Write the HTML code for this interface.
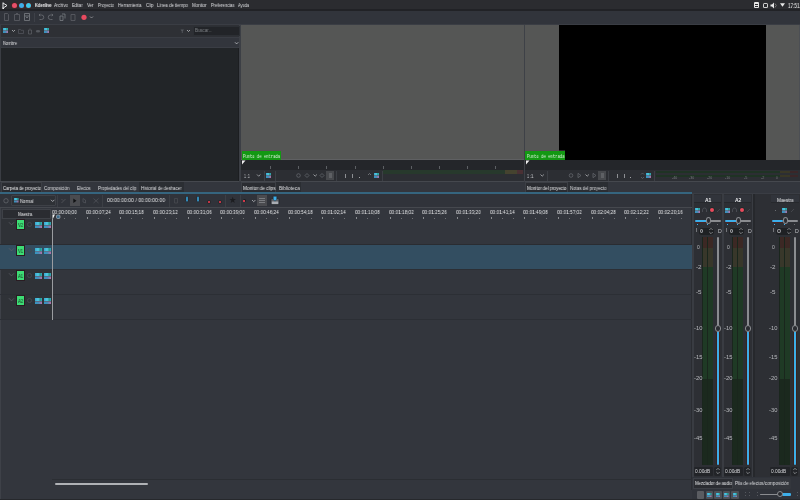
<!DOCTYPE html>
<html><head><meta charset="utf-8"><style>*{margin:0;padding:0;box-sizing:border-box}
html,body{width:800px;height:500px;overflow:hidden;background:#31343b;font-family:"Liberation Sans",sans-serif}
.a{position:absolute}
.t{position:absolute;white-space:nowrap;transform-origin:0 0;will-change:transform}
</style></head><body>
<div class="a" style="left:0px;top:0px;width:800px;height:9.3px;background:#2b2c30;"></div>
<div class="a" style="left:0px;top:9.3px;width:800px;height:1.4px;background:#212226;"></div>
<svg class="a" style="left:2px;top:2px" width="6" height="7" viewBox="0 0 6 7"><path d="M1 0.5 V6.5 M1 1 L5 3.5 L2 5.5" stroke="#e8e8ea" stroke-width="1" fill="none"/><rect x="0.5" y="5.5" width="1.5" height="1.5" fill="#e8e8ea"/></svg>
<div class="a" style="left:11.5px;top:2.5px;width:5px;height:5px;background:#e8506a;border-radius:50%;box-shadow:0 0 0 0.6px #5a2020"></div>
<div class="a" style="left:18.5px;top:2.5px;width:5px;height:5px;background:#3daee9;border-radius:50%;box-shadow:0 0 0 0.6px #5a2020"></div>
<div class="a" style="left:25.5px;top:2.5px;width:5px;height:5px;background:#3dc8e9;border-radius:50%;box-shadow:0 0 0 0.6px #5a2020"></div>
<span class="t" id="t0" style="left:35px;top:3.37px;font-size:5px;line-height:5px;color:#f0f0f2;font-weight:bold;transform:scaleX(0.792);">Kdenlive</span>
<span class="t" id="t1" style="left:54px;top:3.37px;font-size:5px;line-height:5px;color:#dcdde0;font-weight:normal;transform:scaleX(0.839);">Archivo</span>
<span class="t" id="t2" style="left:72px;top:3.37px;font-size:5px;line-height:5px;color:#dcdde0;font-weight:normal;transform:scaleX(0.804);">Editar</span>
<span class="t" id="t3" style="left:87px;top:3.37px;font-size:5px;line-height:5px;color:#dcdde0;font-weight:normal;transform:scaleX(0.865);">Ver</span>
<span class="t" id="t4" style="left:98px;top:3.37px;font-size:5px;line-height:5px;color:#dcdde0;font-weight:normal;transform:scaleX(0.811);">Proyecto</span>
<span class="t" id="t5" style="left:118px;top:3.37px;font-size:5px;line-height:5px;color:#dcdde0;font-weight:normal;transform:scaleX(0.854);">Herramienta</span>
<span class="t" id="t6" style="left:146px;top:3.37px;font-size:5px;line-height:5px;color:#dcdde0;font-weight:normal;transform:scaleX(0.870);">Clip</span>
<span class="t" id="t7" style="left:157px;top:3.37px;font-size:5px;line-height:5px;color:#dcdde0;font-weight:normal;transform:scaleX(0.864);">Línea de tiempo</span>
<span class="t" id="t8" style="left:192px;top:3.37px;font-size:5px;line-height:5px;color:#dcdde0;font-weight:normal;transform:scaleX(0.869);">Monitor</span>
<span class="t" id="t9" style="left:211px;top:3.37px;font-size:5px;line-height:5px;color:#dcdde0;font-weight:normal;transform:scaleX(0.837);">Preferencias</span>
<span class="t" id="t10" style="left:238px;top:3.37px;font-size:5px;line-height:5px;color:#dcdde0;font-weight:normal;transform:scaleX(0.780);">Ayuda</span>
<div class="a" style="left:754px;top:2px;width:5px;height:6px;background:#e6e6e6;border-radius:1px"></div>
<div class="a" style="left:755px;top:4px;width:3px;height:1px;background:#2b2c30;"></div>
<div class="a" style="left:755px;top:6px;width:3px;height:0.8px;background:#2b2c30;"></div>
<div class="a" style="left:763px;top:2.5px;width:5px;height:5.5px;background:#d0d0d0;border-radius:1.5px"></div>
<div class="a" style="left:764px;top:4px;width:3px;height:3px;background:#2b2c30;"></div>
<svg class="a" style="left:770px;top:2px" width="8" height="7" viewBox="0 0 8 7"><path d="M0.5 2.5 H2 L4 0.5 V6.5 L2 4.5 H0.5Z" fill="#e8e8e8"/><path d="M5 1.5 Q7.5 3.5 5 5.5" stroke="#777" stroke-width="1" fill="none"/></svg>
<svg class="a" style="left:780px;top:3px" width="5" height="4" viewBox="0 0 5 4"><path d="M0 0.3 H5 L2.5 3.7Z" fill="#e8e8e8"/></svg>
<span class="t" id="t11" style="left:788px;top:2.31px;font-size:7.2px;line-height:7.2px;color:#ececec;font-weight:normal;transform:scaleX(0.639);">17:51</span>
<div class="a" style="left:0px;top:10.7px;width:800px;height:13.5px;background:#31343b;"></div>
<div class="a" style="left:0px;top:24px;width:800px;height:1px;background:#3a3d44;"></div>
<svg class="a" style="left:0;top:11px" width="100" height="13" viewBox="0 11 100 13"><path d="M4.5 13.5 h3 l1 1 v6 h-4z" stroke="#5d6066" stroke-width="0.8" fill="none"/><path d="M14.5 14.5 h5 v6 h-5z M16 13.5 h2" stroke="#5d6066" stroke-width="0.8" fill="none"/><path d="M24.5 13.5 h5 v7 h-5z M24.5 16 h5 M26 17.5 h2" stroke="#7a7d83" stroke-width="0.8" fill="none"/><path d="M39 15 h2.5 a2 2 0 0 1 0 4.5 h-2 M39 15 l1.2 -1.2 M39 15 l1.2 1.2" stroke="#6c6f75" stroke-width="0.8" fill="none"/><path d="M53 15 h-2.5 a2 2 0 0 0 0 4.5 h2 M53 15 l-1.2 -1.2 M53 15 l-1.2 1.2" stroke="#6c6f75" stroke-width="0.8" fill="none"/><path d="M60 16 h3 v4.5 h-3z M62 14 h3 v4.5" stroke="#7a7d83" stroke-width="0.8" fill="none"/><path d="M71 14.5 h4 v6 h-4z" stroke="#5d6066" stroke-width="0.8" fill="none"/><circle cx="84" cy="17.3" r="2.6" fill="#e84a5f"/><path d="M90 16.5 l1.5 1.5 l1.5 -1.5" stroke="#9a9ca0" stroke-width="0.8" fill="none"/></svg>
<div class="a" style="left:34px;top:13px;width:0.8px;height:9px;background:#3e4148;"></div>
<div class="a" style="left:0px;top:25px;width:241px;height:157px;background:#2e3137;"></div>
<div class="a" style="left:0px;top:25px;width:1px;height:157px;background:#3a3d43;"></div>
<div class="a" style="left:1px;top:25px;width:239px;height:12px;background:#2e3035;"></div>
<div class="a" style="left:1px;top:37px;width:239px;height:1px;background:#3a3d44;"></div>
<div class="a" style="left:1px;top:38px;width:239px;height:9px;background:#32353c;"></div>
<div class="a" style="left:1px;top:47px;width:239px;height:1px;background:#3a3d44;"></div>
<div class="a" style="left:1px;top:48px;width:238px;height:133px;background:#222528;"></div>
<div class="a" style="left:238px;top:48px;width:1px;height:133px;background:#1c1e21;"></div>
<div class="a" style="left:0px;top:181px;width:241px;height:1px;background:#45484e;"></div>
<div class="a" style="left:239.3px;top:25px;width:2.2px;height:157px;background:#3c3f45;"></div>
<svg class="a" style="left:3px;top:28px" width="5" height="5" viewBox="0 0 7 6" preserveAspectRatio="none"><defs><linearGradient id="gt" x1="0" x2="1"><stop offset="0" stop-color="#3aa8cc"/><stop offset="0.45" stop-color="#50c8e8"/><stop offset="0.75" stop-color="#249c8c"/><stop offset="1" stop-color="#38a8c0"/></linearGradient><linearGradient id="gb" x1="0" x2="1"><stop offset="0" stop-color="#3098c0"/><stop offset="0.5" stop-color="#4a8ab8"/><stop offset="1" stop-color="#b870a8"/></linearGradient></defs><rect x="0" y="0" width="7" height="3" fill="url(#gt)"/><rect x="0" y="3" width="7" height="0.5" fill="#8a7a98"/><rect x="0" y="3.6" width="7" height="2.4" fill="url(#gb)"/></svg>
<svg class="a" style="left:10px;top:27px" width="40" height="8" viewBox="10 27 40 8"><path d="M12 30 l1.5 1.5 l1.5 -1.5" stroke="#b8babe" stroke-width="0.8" fill="none"/><path d="M18.5 29.5 h2 l0.5 0.8 h2.5 v3.2 h-5z" stroke="#55585e" stroke-width="0.7" fill="none"/><path d="M28.5 30 h3 v4 h-3z M29.5 29 h1" stroke="#5e6167" stroke-width="0.7" fill="none"/><ellipse cx="38" cy="31.3" rx="2.2" ry="1.2" fill="#55585e"/></svg>
<svg class="a" style="left:44px;top:28px" width="5" height="5" viewBox="0 0 7 6" preserveAspectRatio="none"><defs><linearGradient id="gt" x1="0" x2="1"><stop offset="0" stop-color="#3aa8cc"/><stop offset="0.45" stop-color="#50c8e8"/><stop offset="0.75" stop-color="#249c8c"/><stop offset="1" stop-color="#38a8c0"/></linearGradient><linearGradient id="gb" x1="0" x2="1"><stop offset="0" stop-color="#3098c0"/><stop offset="0.5" stop-color="#4a8ab8"/><stop offset="1" stop-color="#b870a8"/></linearGradient></defs><rect x="0" y="0" width="7" height="3" fill="url(#gt)"/><rect x="0" y="3" width="7" height="0.5" fill="#8a7a98"/><rect x="0" y="3.6" width="7" height="2.4" fill="url(#gb)"/></svg>
<svg class="a" style="left:178px;top:27px" width="15" height="8" viewBox="178 27 15 8"><path d="M180.5 29.5 h3.5 l-1.3 1.8 v1.7 h-0.9 v-1.7z" fill="#55585e"/><path d="M187 30 l1.5 1.5 l1.5 -1.5" stroke="#b8babe" stroke-width="0.8" fill="none"/></svg>
<div class="a" style="left:193px;top:25.5px;width:47px;height:10px;background:#222428;border:0.6px solid #2c2f34"></div>
<span class="t" id="t12" style="left:195px;top:28.54px;font-size:4.8px;line-height:4.8px;color:#7d8085;font-weight:normal;transform:scaleX(0.910);">Buscar...</span>
<span class="t" id="t13" style="left:3px;top:40.77px;font-size:5px;line-height:5px;color:#e0e1e3;font-weight:normal;transform:scaleX(0.787);">Nombre</span>
<svg class="a" style="left:233px;top:41px" width="7" height="5" viewBox="0 0 7 5"><path d="M2 1.3 l1.6 1.6 l1.6 -1.6" stroke="#c8cacd" stroke-width="0.8" fill="none"/></svg>
<div class="a" style="left:241px;top:25px;width:283px;height:135px;background:#555655;"></div>
<div class="a" style="left:241px;top:159px;width:283px;height:1px;background:#5f6062;"></div>
<div class="a" style="left:242px;top:150.6px;width:39px;height:10.2px;background:#139813;box-shadow:0 -0.5px 0 #5a4a5a"></div>
<span class="t" id="t14" style="left:243px;top:154.54px;font-size:4.8px;line-height:4.8px;color:#dcefdc;font-weight:normal;transform:scaleX(0.803);font-family:Liberation Mono">Punto de entrada</span>
<div class="a" style="left:241px;top:160px;width:283px;height:9.5px;background:#24262a;"></div>
<svg class="a" style="left:241px;top:160px" width="5" height="5" viewBox="0 0 5 5"><path d="M1 0.5 H4.5 L1 4.5Z" fill="#f0f0f0"/></svg>
<div class="a" style="left:270px;top:166px;width:0.8px;height:2.6px;background:#5d6064;"></div>
<div class="a" style="left:298px;top:166px;width:0.8px;height:2.6px;background:#5d6064;"></div>
<div class="a" style="left:326px;top:166px;width:0.8px;height:2.6px;background:#5d6064;"></div>
<div class="a" style="left:355px;top:166px;width:0.8px;height:2.6px;background:#5d6064;"></div>
<div class="a" style="left:383px;top:166px;width:0.8px;height:2.6px;background:#5d6064;"></div>
<div class="a" style="left:411px;top:166px;width:0.8px;height:2.6px;background:#5d6064;"></div>
<div class="a" style="left:439px;top:166px;width:0.8px;height:2.6px;background:#5d6064;"></div>
<div class="a" style="left:467px;top:166px;width:0.8px;height:2.6px;background:#5d6064;"></div>
<div class="a" style="left:495px;top:166px;width:0.8px;height:2.6px;background:#5d6064;"></div>
<div class="a" style="left:241px;top:169.5px;width:283px;height:0.8px;background:#34373d;"></div>
<div class="a" style="left:241px;top:170px;width:283px;height:11px;background:#2c2e33;"></div>
<div class="a" style="left:241px;top:181px;width:283px;height:1px;background:#45484e;"></div>
<span class="t" id="t15" style="left:244px;top:174.06px;font-size:5.6px;line-height:5.6px;color:#c8cacd;font-weight:normal;transform:scaleX(0.668);letter-spacing:0.4px">1:1</span>
<svg class="a" style="left:241px;top:170px" width="283" height="11" viewBox="241 170 283 11"><path d="M257 174.5 l1.7 1.7 l1.7 -1.7" stroke="#b0b2b6" stroke-width="0.8" fill="none"/><circle cx="298.5" cy="175.5" r="1.8" stroke="#6a6d72" stroke-width="0.7" fill="none"/><path d="M307 173.5 l2 2 l-2 2 l-2 -2z" stroke="#6a6d72" stroke-width="0.7" fill="none"/><path d="M313.5 174.5 l1.7 1.7 l1.7 -1.7" stroke="#b0b2b6" stroke-width="0.8" fill="none"/><path d="M322 173.5 l2 2 l-2 2 l-2 -2z" stroke="#6a6d72" stroke-width="0.7" fill="none"/><path d="M368 175 l1.5 -1.5 l1.5 1.5" stroke="#8a8c90" stroke-width="0.7" fill="none"/></svg>
<div class="a" style="left:264px;top:171px;width:0.8px;height:10px;background:#3c3f45;"></div>
<div class="a" style="left:275px;top:171px;width:0.8px;height:10px;background:#3c3f45;"></div>
<div class="a" style="left:336px;top:171px;width:0.8px;height:10px;background:#3c3f45;"></div>
<div class="a" style="left:382px;top:171px;width:0.8px;height:10px;background:#3c3f45;"></div>
<svg class="a" style="left:266px;top:173px" width="5" height="5" viewBox="0 0 7 6" preserveAspectRatio="none"><defs><linearGradient id="gt" x1="0" x2="1"><stop offset="0" stop-color="#3aa8cc"/><stop offset="0.45" stop-color="#50c8e8"/><stop offset="0.75" stop-color="#249c8c"/><stop offset="1" stop-color="#38a8c0"/></linearGradient><linearGradient id="gb" x1="0" x2="1"><stop offset="0" stop-color="#3098c0"/><stop offset="0.5" stop-color="#4a8ab8"/><stop offset="1" stop-color="#b870a8"/></linearGradient></defs><rect x="0" y="0" width="7" height="3" fill="url(#gt)"/><rect x="0" y="3" width="7" height="0.5" fill="#8a7a98"/><rect x="0" y="3.6" width="7" height="2.4" fill="url(#gb)"/></svg>
<div class="a" style="left:326px;top:171px;width:8px;height:9px;background:#47494d;"></div>
<div class="a" style="left:328.5px;top:173px;width:3px;height:5px;background:#5e6064;"></div>
<div class="a" style="left:345px;top:174px;width:0.9px;height:3.5px;background:#8d8f93;"></div>
<div class="a" style="left:352px;top:174px;width:0.9px;height:3.5px;background:#8d8f93;"></div>
<div class="a" style="left:359px;top:177px;width:1px;height:1px;background:#a0a2a6;"></div>
<svg class="a" style="left:374px;top:173px" width="5" height="5" viewBox="0 0 7 6" preserveAspectRatio="none"><defs><linearGradient id="gt" x1="0" x2="1"><stop offset="0" stop-color="#3aa8cc"/><stop offset="0.45" stop-color="#50c8e8"/><stop offset="0.75" stop-color="#249c8c"/><stop offset="1" stop-color="#38a8c0"/></linearGradient><linearGradient id="gb" x1="0" x2="1"><stop offset="0" stop-color="#3098c0"/><stop offset="0.5" stop-color="#4a8ab8"/><stop offset="1" stop-color="#b870a8"/></linearGradient></defs><rect x="0" y="0" width="7" height="3" fill="url(#gt)"/><rect x="0" y="3" width="7" height="0.5" fill="#8a7a98"/><rect x="0" y="3.6" width="7" height="2.4" fill="url(#gb)"/></svg>
<div class="a" style="left:383px;top:170px;width:140px;height:4px;background:#27392c;"></div>
<div class="a" style="left:505px;top:170px;width:12px;height:4px;background:#45432f;"></div>
<div class="a" style="left:517px;top:170px;width:6px;height:4px;background:#4a3034;"></div>
<div class="a" style="left:524px;top:25px;width:1.5px;height:157px;background:#3e4147;"></div>
<div class="a" style="left:525px;top:25px;width:275px;height:135px;background:#555655;"></div>
<div class="a" style="left:559px;top:25px;width:207px;height:135px;background:#000000;"></div>
<div class="a" style="left:799px;top:25px;width:1px;height:157px;background:#4c4f54;"></div>
<div class="a" style="left:525px;top:150.6px;width:40px;height:10.2px;background:#139813;box-shadow:0 -0.5px 0 #5a4a5a"></div>
<span class="t" id="t16" style="left:526.5px;top:154.54px;font-size:4.8px;line-height:4.8px;color:#dcefdc;font-weight:normal;transform:scaleX(0.814);font-family:Liberation Mono">Punto de entrada</span>
<div class="a" style="left:525px;top:160px;width:275px;height:9.5px;background:#24262a;"></div>
<svg class="a" style="left:525px;top:160px" width="5" height="5" viewBox="0 0 5 5"><path d="M1 0.5 H4.5 L1 4.5Z" fill="#f0f0f0"/></svg>
<div class="a" style="left:525px;top:169.5px;width:275px;height:0.8px;background:#34373d;"></div>
<div class="a" style="left:525px;top:170px;width:275px;height:11px;background:#2c2e33;"></div>
<div class="a" style="left:525px;top:181px;width:275px;height:1px;background:#45484e;"></div>
<span class="t" id="t17" style="left:527px;top:174.06px;font-size:5.6px;line-height:5.6px;color:#c8cacd;font-weight:normal;transform:scaleX(0.723);letter-spacing:0.4px">1:1</span>
<svg class="a" style="left:525px;top:170px" width="275" height="11" viewBox="525 170 275 11"><path d="M540.5 174.5 l1.7 1.7 l1.7 -1.7" stroke="#b0b2b6" stroke-width="0.8" fill="none"/><circle cx="571" cy="175.5" r="1.8" stroke="#6a6d72" stroke-width="0.7" fill="none"/><path d="M578 173.3 l3 2.2 l-3 2.2z" stroke="#6a6d72" stroke-width="0.7" fill="none"/><path d="M585.5 174.5 l1.7 1.7 l1.7 -1.7" stroke="#b0b2b6" stroke-width="0.8" fill="none"/><path d="M593 173.3 l3 2.2 l-3 2.2z" stroke="#6a6d72" stroke-width="0.7" fill="none"/><path d="M641 174.5 l1.5 -1.5 l1.5 1.5 M641 177 l1.5 1.5 l1.5 -1.5" stroke="#6a6d72" stroke-width="0.7" fill="none"/></svg>
<div class="a" style="left:547px;top:171px;width:0.8px;height:10px;background:#3c3f45;"></div>
<div class="a" style="left:608px;top:171px;width:0.8px;height:10px;background:#3c3f45;"></div>
<div class="a" style="left:654px;top:171px;width:0.8px;height:10px;background:#3c3f45;"></div>
<div class="a" style="left:598px;top:171px;width:8px;height:9px;background:#47494d;"></div>
<div class="a" style="left:600.5px;top:173px;width:3px;height:5px;background:#5e6064;"></div>
<div class="a" style="left:617px;top:174px;width:0.9px;height:3.5px;background:#8d8f93;"></div>
<div class="a" style="left:624px;top:174px;width:0.9px;height:3.5px;background:#8d8f93;"></div>
<div class="a" style="left:630px;top:177px;width:1px;height:1px;background:#a0a2a6;"></div>
<svg class="a" style="left:646px;top:173px" width="5" height="5" viewBox="0 0 7 6" preserveAspectRatio="none"><defs><linearGradient id="gt" x1="0" x2="1"><stop offset="0" stop-color="#3aa8cc"/><stop offset="0.45" stop-color="#50c8e8"/><stop offset="0.75" stop-color="#249c8c"/><stop offset="1" stop-color="#38a8c0"/></linearGradient><linearGradient id="gb" x1="0" x2="1"><stop offset="0" stop-color="#3098c0"/><stop offset="0.5" stop-color="#4a8ab8"/><stop offset="1" stop-color="#b870a8"/></linearGradient></defs><rect x="0" y="0" width="7" height="3" fill="url(#gt)"/><rect x="0" y="3" width="7" height="0.5" fill="#8a7a98"/><rect x="0" y="3.6" width="7" height="2.4" fill="url(#gb)"/></svg>
<div class="a" style="left:656px;top:170.8px;width:124px;height:2.4px;background:#1f3324;"></div>
<div class="a" style="left:780px;top:170.8px;width:10px;height:2.4px;background:#393726;"></div>
<div class="a" style="left:790px;top:170.8px;width:8px;height:2.4px;background:#3a2628;"></div>
<div class="a" style="left:656px;top:174.5px;width:124px;height:2.4px;background:#1f3324;"></div>
<div class="a" style="left:780px;top:174.5px;width:10px;height:2.4px;background:#393726;"></div>
<div class="a" style="left:790px;top:174.5px;width:8px;height:2.4px;background:#3a2628;"></div>
<span class="t" id="t18" style="left:672px;top:177.49px;font-size:3.2px;line-height:3.2px;color:#7a7c80;font-weight:normal;transform:scaleX(1.106);">-40</span>
<span class="t" id="t19" style="left:689px;top:177.49px;font-size:3.2px;line-height:3.2px;color:#7a7c80;font-weight:normal;transform:scaleX(1.106);">-30</span>
<span class="t" id="t20" style="left:707px;top:177.49px;font-size:3.2px;line-height:3.2px;color:#7a7c80;font-weight:normal;transform:scaleX(1.106);">-20</span>
<span class="t" id="t21" style="left:725px;top:177.49px;font-size:3.2px;line-height:3.2px;color:#7a7c80;font-weight:normal;transform:scaleX(1.106);">-10</span>
<span class="t" id="t22" style="left:744px;top:177.49px;font-size:3.2px;line-height:3.2px;color:#7a7c80;font-weight:normal;transform:scaleX(1.196);">-5</span>
<span class="t" id="t23" style="left:761px;top:177.49px;font-size:3.2px;line-height:3.2px;color:#7a7c80;font-weight:normal;transform:scaleX(1.196);">-2</span>
<span class="t" id="t24" style="left:776px;top:177.49px;font-size:3.2px;line-height:3.2px;color:#7a7c80;font-weight:normal;transform:scaleX(0.954);">0</span>
<div class="a" style="left:0px;top:182px;width:800px;height:11px;background:#33363d;"></div>
<div class="a" style="left:1px;top:182px;width:41px;height:10.5px;background:#2a2c31;border:0.6px solid #3c3f45"></div>
<span class="t" id="t25" style="left:2.5px;top:186.64px;font-size:4.8px;line-height:4.8px;color:#e6e7e9;font-weight:normal;transform:scaleX(0.874);">Carpeta de proyecto</span>
<span class="t" id="t26" style="left:44px;top:186.64px;font-size:4.8px;line-height:4.8px;color:#dcdde0;font-weight:normal;transform:scaleX(0.919);">Composición</span>
<span class="t" id="t27" style="left:77px;top:186.64px;font-size:4.8px;line-height:4.8px;color:#dcdde0;font-weight:normal;transform:scaleX(0.844);">Efectos</span>
<span class="t" id="t28" style="left:98px;top:186.64px;font-size:4.8px;line-height:4.8px;color:#dcdde0;font-weight:normal;transform:scaleX(0.891);">Propiedades del clip</span>
<span class="t" id="t29" style="left:141px;top:186.64px;font-size:4.8px;line-height:4.8px;color:#dcdde0;font-weight:normal;transform:scaleX(0.899);">Historial de deshacer</span>
<div class="a" style="left:139px;top:182px;width:45px;height:10.5px;background:#2b2e33;"></div>
<span class="t" id="t30" style="left:141px;top:186.64px;font-size:4.8px;line-height:4.8px;color:#dcdde0;font-weight:normal;transform:scaleX(0.899);">Historial de deshacer</span>
<div class="a" style="left:241px;top:182px;width:35px;height:10.5px;background:#2a2c31;border:0.6px solid #3c3f45"></div>
<span class="t" id="t31" style="left:243px;top:186.64px;font-size:4.8px;line-height:4.8px;color:#e6e7e9;font-weight:normal;transform:scaleX(0.967);">Monitor de clips</span>
<div class="a" style="left:276px;top:182px;width:25px;height:10.5px;background:#2b2e33;"></div>
<span class="t" id="t32" style="left:279px;top:186.64px;font-size:4.8px;line-height:4.8px;color:#dcdde0;font-weight:normal;transform:scaleX(0.985);">Biblioteca</span>
<div class="a" style="left:525px;top:182px;width:43px;height:10.5px;background:#2a2c31;border:0.6px solid #3c3f45"></div>
<span class="t" id="t33" style="left:527px;top:186.64px;font-size:4.8px;line-height:4.8px;color:#e6e7e9;font-weight:normal;transform:scaleX(0.909);">Monitor del proyecto</span>
<div class="a" style="left:568px;top:182px;width:40px;height:10.5px;background:#2b2e33;"></div>
<span class="t" id="t34" style="left:570px;top:186.64px;font-size:4.8px;line-height:4.8px;color:#dcdde0;font-weight:normal;transform:scaleX(0.912);">Notas del proyecto</span>
<div class="a" style="left:0px;top:192.2px;width:692px;height:1.5px;background:#35657f;"></div>
<div class="a" style="left:0px;top:194px;width:692px;height:14px;background:#30333a;"></div>
<div class="a" style="left:11px;top:195px;width:45px;height:11px;background:#2e3136;border:0.7px solid #3e4147;border-radius:1px"></div>
<svg class="a" style="left:14px;top:198px" width="4.5" height="4.5" viewBox="0 0 7 6" preserveAspectRatio="none"><defs><linearGradient id="gt" x1="0" x2="1"><stop offset="0" stop-color="#3aa8cc"/><stop offset="0.45" stop-color="#50c8e8"/><stop offset="0.75" stop-color="#249c8c"/><stop offset="1" stop-color="#38a8c0"/></linearGradient><linearGradient id="gb" x1="0" x2="1"><stop offset="0" stop-color="#3098c0"/><stop offset="0.5" stop-color="#4a8ab8"/><stop offset="1" stop-color="#b870a8"/></linearGradient></defs><rect x="0" y="0" width="7" height="3" fill="url(#gt)"/><rect x="0" y="3" width="7" height="0.5" fill="#8a7a98"/><rect x="0" y="3.6" width="7" height="2.4" fill="url(#gb)"/></svg>
<span class="t" id="t35" style="left:20px;top:198.57px;font-size:5px;line-height:5px;color:#e2e3e5;font-weight:normal;transform:scaleX(0.837);">Normal</span>
<div class="a" style="left:57px;top:195px;width:0.8px;height:12px;background:#3c3f45;"></div>
<div class="a" style="left:70px;top:195px;width:9.5px;height:11px;background:#4a4b4f;"></div>
<div class="a" style="left:102px;top:195px;width:0.8px;height:12px;background:#3c3f45;"></div>
<span class="t" id="t36" style="left:107px;top:198.31px;font-size:5.3px;line-height:5.3px;color:#e0e1e3;font-weight:normal;transform:scaleX(0.960);">00:00:00:00 / 00:00:00:00</span>
<div class="a" style="left:169px;top:195px;width:0.8px;height:12px;background:#3c3f45;"></div>
<svg class="a" style="left:185px;top:195.5px" width="4" height="8" viewBox="0 0 4 8"><path d="M1 0.6 h2 v4.2 l-1 1.8 l-1 -1.8z" fill="#3daee9" stroke="#17191c" stroke-width="0.5"/></svg>
<svg class="a" style="left:196px;top:195.5px" width="4" height="8" viewBox="0 0 4 8"><path d="M1 0.6 h2 v4.2 l-1 1.8 l-1 -1.8z" fill="#3daee9" stroke="#17191c" stroke-width="0.5"/></svg>
<div class="a" style="left:207.8px;top:200.8px;width:2.4px;height:2px;background:#c03545;box-shadow:0 0 0 0.4px #1c1d20"></div>
<div class="a" style="left:218.8px;top:200.8px;width:2.4px;height:2px;background:#c03545;box-shadow:0 0 0 0.4px #1c1d20"></div>
<div class="a" style="left:225px;top:195px;width:0.8px;height:12px;background:#3c3f45;"></div>
<div class="a" style="left:240px;top:195px;width:0.8px;height:12px;background:#3c3f45;"></div>
<div class="a" style="left:242.5px;top:198.8px;width:3.5px;height:3.5px;background:#1a1b1e;border-radius:50%"></div>
<div class="a" style="left:243px;top:200px;width:1.6px;height:1.8px;background:#d03a4a;"></div>
<svg class="a" style="left:0;top:194px" width="290" height="14" viewBox="0 194 290 14"><circle cx="6" cy="200.8" r="2.2" stroke="#6a6d72" stroke-width="0.7" fill="none"/><path d="M51 199.8 l1.7 1.7 l1.7 -1.7" stroke="#c0c2c6" stroke-width="0.8" fill="none"/><path d="M61.5 203 l4 -4 M61.5 199 l1.5 1.5" stroke="#55585e" stroke-width="0.8" fill="none"/><path d="M73.3 198.5 l3.2 2.3 l-3.2 2.3z" fill="#111214"/><path d="M83 198.5 l2.5 1.5 v3 l-2.5 -1z" stroke="#55585e" stroke-width="0.7" fill="none"/><path d="M93.5 198.5 l5 4.5 M93.5 203 l5 -4.5" stroke="#55585e" stroke-width="0.7" fill="none"/><path d="M174.5 198.5 h3 v4.5 h-3z" stroke="#4a4d53" stroke-width="0.7" fill="none"/><path d="M232.7 196.8 l0.8 2.3 h2.4 l-1.9 1.5 l0.7 2.4 l-2 -1.4 l-2 1.4 l0.7 -2.4 l-1.9 -1.5 h2.4z" fill="#1c1d20"/><path d="M252 200 l1.7 1.7 l1.7 -1.7" stroke="#b8babe" stroke-width="0.8" fill="none"/></svg>
<div class="a" style="left:257px;top:195px;width:9.5px;height:11px;background:#4a4b4f;"></div>
<div class="a" style="left:259px;top:198px;width:5.5px;height:0.7px;background:#7a7c80;"></div>
<div class="a" style="left:259px;top:200px;width:5.5px;height:0.7px;background:#7a7c80;"></div>
<div class="a" style="left:259px;top:202px;width:5.5px;height:0.7px;background:#7a7c80;"></div>
<svg class="a" style="left:270px;top:195px" width="10" height="11" viewBox="0 0 10 11"><rect x="1" y="3.5" width="8" height="6" rx="1" fill="#5d6167" stroke="#1e2023" stroke-width="0.6"/><rect x="1.8" y="6.5" width="6.4" height="2.6" fill="#a9adb3"/><path d="M3.2 1.2 h3.6 v3 l-1.8 2 l-1.8 -2z" fill="#3daee9" stroke="#1e2023" stroke-width="0.5"/></svg>
<div class="a" style="left:0px;top:208px;width:692px;height:291px;background:#33363d;"></div>
<div class="a" style="left:0px;top:208px;width:1.2px;height:291px;background:#3e4148;"></div>
<div class="a" style="left:691px;top:194px;width:1px;height:296px;background:#2a2c31;"></div>
<div class="a" style="left:1px;top:219px;width:51px;height:101px;background:#2f3237;"></div>
<div class="a" style="left:2px;top:208.5px;width:49px;height:10px;background:#2a2c31;border:0.6px solid #3e4147"></div>
<span class="t" id="t37" style="left:18px;top:212.64px;font-size:4.8px;line-height:4.8px;color:#e2e3e5;font-weight:normal;transform:scaleX(0.808);">Maestra</span>
<div class="a" style="left:52px;top:208px;width:639px;height:11px;background:#33363d;"></div>
<div class="a" style="left:0px;top:207.3px;width:692px;height:0.7px;background:#45484e;"></div>
<span class="t" id="t38" style="left:52.0px;top:210.06px;font-size:5.6px;line-height:5.6px;color:#e4e5e7;font-weight:normal;transform:scaleX(0.839);">00:00:00;00</span>
<div class="a" style="left:64.0px;top:217.8px;width:0.8px;height:1px;background:#6f7175;"></div>
<div class="a" style="left:75.0px;top:217.8px;width:0.8px;height:1px;background:#6f7175;"></div>
<span class="t" id="t39" style="left:85.67px;top:210.06px;font-size:5.6px;line-height:5.6px;color:#e4e5e7;font-weight:normal;transform:scaleX(0.839);">00:00:07;24</span>
<div class="a" style="left:86.67px;top:216.8px;width:0.8px;height:2px;background:#8a8c90;"></div>
<div class="a" style="left:97.67px;top:217.8px;width:0.8px;height:1px;background:#6f7175;"></div>
<div class="a" style="left:108.67px;top:217.8px;width:0.8px;height:1px;background:#6f7175;"></div>
<span class="t" id="t40" style="left:119.34px;top:210.06px;font-size:5.6px;line-height:5.6px;color:#e4e5e7;font-weight:normal;transform:scaleX(0.839);">00:00:15;18</span>
<div class="a" style="left:120.34px;top:216.8px;width:0.8px;height:2px;background:#8a8c90;"></div>
<div class="a" style="left:131.34px;top:217.8px;width:0.8px;height:1px;background:#6f7175;"></div>
<div class="a" style="left:142.34px;top:217.8px;width:0.8px;height:1px;background:#6f7175;"></div>
<span class="t" id="t41" style="left:153.01px;top:210.06px;font-size:5.6px;line-height:5.6px;color:#e4e5e7;font-weight:normal;transform:scaleX(0.839);">00:00:23;12</span>
<div class="a" style="left:154.01px;top:216.8px;width:0.8px;height:2px;background:#8a8c90;"></div>
<div class="a" style="left:165.01px;top:217.8px;width:0.8px;height:1px;background:#6f7175;"></div>
<div class="a" style="left:176.01px;top:217.8px;width:0.8px;height:1px;background:#6f7175;"></div>
<span class="t" id="t42" style="left:186.68px;top:210.06px;font-size:5.6px;line-height:5.6px;color:#e4e5e7;font-weight:normal;transform:scaleX(0.839);">00:00:31;06</span>
<div class="a" style="left:187.68px;top:216.8px;width:0.8px;height:2px;background:#8a8c90;"></div>
<div class="a" style="left:198.68px;top:217.8px;width:0.8px;height:1px;background:#6f7175;"></div>
<div class="a" style="left:209.68px;top:217.8px;width:0.8px;height:1px;background:#6f7175;"></div>
<span class="t" id="t43" style="left:220.35px;top:210.06px;font-size:5.6px;line-height:5.6px;color:#e4e5e7;font-weight:normal;transform:scaleX(0.839);">00:00:39;00</span>
<div class="a" style="left:221.35px;top:216.8px;width:0.8px;height:2px;background:#8a8c90;"></div>
<div class="a" style="left:232.35px;top:217.8px;width:0.8px;height:1px;background:#6f7175;"></div>
<div class="a" style="left:243.35px;top:217.8px;width:0.8px;height:1px;background:#6f7175;"></div>
<span class="t" id="t44" style="left:254.02px;top:210.06px;font-size:5.6px;line-height:5.6px;color:#e4e5e7;font-weight:normal;transform:scaleX(0.839);">00:00:46;24</span>
<div class="a" style="left:255.02px;top:216.8px;width:0.8px;height:2px;background:#8a8c90;"></div>
<div class="a" style="left:266.02px;top:217.8px;width:0.8px;height:1px;background:#6f7175;"></div>
<div class="a" style="left:277.02px;top:217.8px;width:0.8px;height:1px;background:#6f7175;"></div>
<span class="t" id="t45" style="left:287.69px;top:210.06px;font-size:5.6px;line-height:5.6px;color:#e4e5e7;font-weight:normal;transform:scaleX(0.839);">00:00:54;18</span>
<div class="a" style="left:288.69px;top:216.8px;width:0.8px;height:2px;background:#8a8c90;"></div>
<div class="a" style="left:299.69px;top:217.8px;width:0.8px;height:1px;background:#6f7175;"></div>
<div class="a" style="left:310.69px;top:217.8px;width:0.8px;height:1px;background:#6f7175;"></div>
<span class="t" id="t46" style="left:321.36px;top:210.06px;font-size:5.6px;line-height:5.6px;color:#e4e5e7;font-weight:normal;transform:scaleX(0.839);">00:01:02;14</span>
<div class="a" style="left:322.36px;top:216.8px;width:0.8px;height:2px;background:#8a8c90;"></div>
<div class="a" style="left:333.36px;top:217.8px;width:0.8px;height:1px;background:#6f7175;"></div>
<div class="a" style="left:344.36px;top:217.8px;width:0.8px;height:1px;background:#6f7175;"></div>
<span class="t" id="t47" style="left:355.03px;top:210.06px;font-size:5.6px;line-height:5.6px;color:#e4e5e7;font-weight:normal;transform:scaleX(0.839);">00:01:10;08</span>
<div class="a" style="left:356.03px;top:216.8px;width:0.8px;height:2px;background:#8a8c90;"></div>
<div class="a" style="left:367.03px;top:217.8px;width:0.8px;height:1px;background:#6f7175;"></div>
<div class="a" style="left:378.03px;top:217.8px;width:0.8px;height:1px;background:#6f7175;"></div>
<span class="t" id="t48" style="left:388.7px;top:210.06px;font-size:5.6px;line-height:5.6px;color:#e4e5e7;font-weight:normal;transform:scaleX(0.839);">00:01:18;02</span>
<div class="a" style="left:389.7px;top:216.8px;width:0.8px;height:2px;background:#8a8c90;"></div>
<div class="a" style="left:400.7px;top:217.8px;width:0.8px;height:1px;background:#6f7175;"></div>
<div class="a" style="left:411.7px;top:217.8px;width:0.8px;height:1px;background:#6f7175;"></div>
<span class="t" id="t49" style="left:422.37px;top:210.06px;font-size:5.6px;line-height:5.6px;color:#e4e5e7;font-weight:normal;transform:scaleX(0.839);">00:01:25;26</span>
<div class="a" style="left:423.37px;top:216.8px;width:0.8px;height:2px;background:#8a8c90;"></div>
<div class="a" style="left:434.37px;top:217.8px;width:0.8px;height:1px;background:#6f7175;"></div>
<div class="a" style="left:445.37px;top:217.8px;width:0.8px;height:1px;background:#6f7175;"></div>
<span class="t" id="t50" style="left:456.04px;top:210.06px;font-size:5.6px;line-height:5.6px;color:#e4e5e7;font-weight:normal;transform:scaleX(0.839);">00:01:33;20</span>
<div class="a" style="left:457.04px;top:216.8px;width:0.8px;height:2px;background:#8a8c90;"></div>
<div class="a" style="left:468.04px;top:217.8px;width:0.8px;height:1px;background:#6f7175;"></div>
<div class="a" style="left:479.04px;top:217.8px;width:0.8px;height:1px;background:#6f7175;"></div>
<span class="t" id="t51" style="left:489.71px;top:210.06px;font-size:5.6px;line-height:5.6px;color:#e4e5e7;font-weight:normal;transform:scaleX(0.839);">00:01:41;14</span>
<div class="a" style="left:490.71px;top:216.8px;width:0.8px;height:2px;background:#8a8c90;"></div>
<div class="a" style="left:501.71px;top:217.8px;width:0.8px;height:1px;background:#6f7175;"></div>
<div class="a" style="left:512.71px;top:217.8px;width:0.8px;height:1px;background:#6f7175;"></div>
<span class="t" id="t52" style="left:523.38px;top:210.06px;font-size:5.6px;line-height:5.6px;color:#e4e5e7;font-weight:normal;transform:scaleX(0.839);">00:01:49;08</span>
<div class="a" style="left:524.38px;top:216.8px;width:0.8px;height:2px;background:#8a8c90;"></div>
<div class="a" style="left:535.38px;top:217.8px;width:0.8px;height:1px;background:#6f7175;"></div>
<div class="a" style="left:546.38px;top:217.8px;width:0.8px;height:1px;background:#6f7175;"></div>
<span class="t" id="t53" style="left:557.05px;top:210.06px;font-size:5.6px;line-height:5.6px;color:#e4e5e7;font-weight:normal;transform:scaleX(0.839);">00:01:57;02</span>
<div class="a" style="left:558.05px;top:216.8px;width:0.8px;height:2px;background:#8a8c90;"></div>
<div class="a" style="left:569.05px;top:217.8px;width:0.8px;height:1px;background:#6f7175;"></div>
<div class="a" style="left:580.05px;top:217.8px;width:0.8px;height:1px;background:#6f7175;"></div>
<span class="t" id="t54" style="left:590.72px;top:210.06px;font-size:5.6px;line-height:5.6px;color:#e4e5e7;font-weight:normal;transform:scaleX(0.839);">00:02:04;28</span>
<div class="a" style="left:591.72px;top:216.8px;width:0.8px;height:2px;background:#8a8c90;"></div>
<div class="a" style="left:602.72px;top:217.8px;width:0.8px;height:1px;background:#6f7175;"></div>
<div class="a" style="left:613.72px;top:217.8px;width:0.8px;height:1px;background:#6f7175;"></div>
<span class="t" id="t55" style="left:624.39px;top:210.06px;font-size:5.6px;line-height:5.6px;color:#e4e5e7;font-weight:normal;transform:scaleX(0.839);">00:02:12;22</span>
<div class="a" style="left:625.39px;top:216.8px;width:0.8px;height:2px;background:#8a8c90;"></div>
<div class="a" style="left:636.39px;top:217.8px;width:0.8px;height:1px;background:#6f7175;"></div>
<div class="a" style="left:647.39px;top:217.8px;width:0.8px;height:1px;background:#6f7175;"></div>
<span class="t" id="t56" style="left:658.06px;top:210.06px;font-size:5.6px;line-height:5.6px;color:#e4e5e7;font-weight:normal;transform:scaleX(0.839);">00:02:20;16</span>
<div class="a" style="left:659.06px;top:216.8px;width:0.8px;height:2px;background:#8a8c90;"></div>
<div class="a" style="left:670.06px;top:217.8px;width:0.8px;height:1px;background:#6f7175;"></div>
<div class="a" style="left:681.06px;top:217.8px;width:0.8px;height:1px;background:#6f7175;"></div>
<div class="a" style="left:0px;top:244.3px;width:692px;height:0.7px;background:#2a2c31;"></div>
<div class="a" style="left:0px;top:245px;width:692px;height:24.3px;background:#334e61;"></div>
<div class="a" style="left:0px;top:269.3px;width:692px;height:0.7px;background:#2c2f35;"></div>
<div class="a" style="left:0px;top:294.3px;width:692px;height:0.7px;background:#2c2f35;"></div>
<div class="a" style="left:0px;top:319.3px;width:692px;height:0.8px;background:#2c2f35;"></div>
<div class="a" style="left:1px;top:245px;width:51px;height:24.3px;background:#334e61;"></div>
<svg class="a" style="left:8px;top:221px" width="7" height="6" viewBox="0 0 7 6"><path d="M1 1.3 l2.5 2.6 l2.5 -2.6" stroke="#5f6268" stroke-width="0.7" fill="none"/></svg>
<div class="a" style="left:16px;top:219px;width:8.5px;height:11px;background:#3ddc75;border:0.6px solid #2a1c22"></div>
<span class="t" id="t57" style="left:17.6px;top:222.77px;font-size:5.0px;line-height:5.0px;color:#14301c;font-weight:normal;transform:scaleX(0.849);">V2</span>
<div class="a" style="left:27px;top:222px;width:5px;height:5px;background:transparent;border:0.6px solid #44474d;border-radius:50%"></div>
<svg class="a" style="left:35px;top:222px" width="7" height="6.3" viewBox="0 0 7 6" preserveAspectRatio="none"><defs><linearGradient id="gt" x1="0" x2="1"><stop offset="0" stop-color="#3aa8cc"/><stop offset="0.45" stop-color="#50c8e8"/><stop offset="0.75" stop-color="#249c8c"/><stop offset="1" stop-color="#38a8c0"/></linearGradient><linearGradient id="gb" x1="0" x2="1"><stop offset="0" stop-color="#3098c0"/><stop offset="0.5" stop-color="#4a8ab8"/><stop offset="1" stop-color="#b870a8"/></linearGradient></defs><rect x="0" y="0" width="7" height="3" fill="url(#gt)"/><rect x="0" y="3" width="7" height="0.5" fill="#8a7a98"/><rect x="0" y="3.6" width="7" height="2.4" fill="url(#gb)"/></svg>
<svg class="a" style="left:44px;top:222px" width="7" height="6.3" viewBox="0 0 7 6" preserveAspectRatio="none"><defs><linearGradient id="gt" x1="0" x2="1"><stop offset="0" stop-color="#3aa8cc"/><stop offset="0.45" stop-color="#50c8e8"/><stop offset="0.75" stop-color="#249c8c"/><stop offset="1" stop-color="#38a8c0"/></linearGradient><linearGradient id="gb" x1="0" x2="1"><stop offset="0" stop-color="#3098c0"/><stop offset="0.5" stop-color="#4a8ab8"/><stop offset="1" stop-color="#b870a8"/></linearGradient></defs><rect x="0" y="0" width="7" height="3" fill="url(#gt)"/><rect x="0" y="3" width="7" height="0.5" fill="#8a7a98"/><rect x="0" y="3.6" width="7" height="2.4" fill="url(#gb)"/></svg>
<svg class="a" style="left:8px;top:247px" width="7" height="6" viewBox="0 0 7 6"><path d="M1 1.3 l2.5 2.6 l2.5 -2.6" stroke="#5f6268" stroke-width="0.7" fill="none"/></svg>
<div class="a" style="left:16px;top:245px;width:8.5px;height:11px;background:#3ddc75;border:0.6px solid #2a1c22"></div>
<span class="t" id="t58" style="left:17.6px;top:248.77px;font-size:5.0px;line-height:5.0px;color:#14301c;font-weight:normal;transform:scaleX(0.849);">V1</span>
<div class="a" style="left:27px;top:248px;width:5px;height:5px;background:transparent;border:0.6px solid #44474d;border-radius:50%"></div>
<svg class="a" style="left:35px;top:248px" width="7" height="6.3" viewBox="0 0 7 6" preserveAspectRatio="none"><defs><linearGradient id="gt" x1="0" x2="1"><stop offset="0" stop-color="#3aa8cc"/><stop offset="0.45" stop-color="#50c8e8"/><stop offset="0.75" stop-color="#249c8c"/><stop offset="1" stop-color="#38a8c0"/></linearGradient><linearGradient id="gb" x1="0" x2="1"><stop offset="0" stop-color="#3098c0"/><stop offset="0.5" stop-color="#4a8ab8"/><stop offset="1" stop-color="#b870a8"/></linearGradient></defs><rect x="0" y="0" width="7" height="3" fill="url(#gt)"/><rect x="0" y="3" width="7" height="0.5" fill="#8a7a98"/><rect x="0" y="3.6" width="7" height="2.4" fill="url(#gb)"/></svg>
<svg class="a" style="left:44px;top:248px" width="7" height="6.3" viewBox="0 0 7 6" preserveAspectRatio="none"><defs><linearGradient id="gt" x1="0" x2="1"><stop offset="0" stop-color="#3aa8cc"/><stop offset="0.45" stop-color="#50c8e8"/><stop offset="0.75" stop-color="#249c8c"/><stop offset="1" stop-color="#38a8c0"/></linearGradient><linearGradient id="gb" x1="0" x2="1"><stop offset="0" stop-color="#3098c0"/><stop offset="0.5" stop-color="#4a8ab8"/><stop offset="1" stop-color="#b870a8"/></linearGradient></defs><rect x="0" y="0" width="7" height="3" fill="url(#gt)"/><rect x="0" y="3" width="7" height="0.5" fill="#8a7a98"/><rect x="0" y="3.6" width="7" height="2.4" fill="url(#gb)"/></svg>
<svg class="a" style="left:8px;top:272px" width="7" height="6" viewBox="0 0 7 6"><path d="M1 1.3 l2.5 2.6 l2.5 -2.6" stroke="#5f6268" stroke-width="0.7" fill="none"/></svg>
<div class="a" style="left:16px;top:270px;width:8.5px;height:11px;background:#3ddc75;border:0.6px solid #2a1c22"></div>
<span class="t" id="t59" style="left:17.6px;top:273.77px;font-size:5.0px;line-height:5.0px;color:#14301c;font-weight:normal;transform:scaleX(0.849);">A1</span>
<div class="a" style="left:27px;top:273px;width:5px;height:5px;background:transparent;border:0.6px solid #44474d;border-radius:50%"></div>
<svg class="a" style="left:35px;top:273px" width="7" height="6.3" viewBox="0 0 7 6" preserveAspectRatio="none"><defs><linearGradient id="gt" x1="0" x2="1"><stop offset="0" stop-color="#3aa8cc"/><stop offset="0.45" stop-color="#50c8e8"/><stop offset="0.75" stop-color="#249c8c"/><stop offset="1" stop-color="#38a8c0"/></linearGradient><linearGradient id="gb" x1="0" x2="1"><stop offset="0" stop-color="#3098c0"/><stop offset="0.5" stop-color="#4a8ab8"/><stop offset="1" stop-color="#b870a8"/></linearGradient></defs><rect x="0" y="0" width="7" height="3" fill="url(#gt)"/><rect x="0" y="3" width="7" height="0.5" fill="#8a7a98"/><rect x="0" y="3.6" width="7" height="2.4" fill="url(#gb)"/></svg>
<svg class="a" style="left:44px;top:273px" width="7" height="6.3" viewBox="0 0 7 6" preserveAspectRatio="none"><defs><linearGradient id="gt" x1="0" x2="1"><stop offset="0" stop-color="#3aa8cc"/><stop offset="0.45" stop-color="#50c8e8"/><stop offset="0.75" stop-color="#249c8c"/><stop offset="1" stop-color="#38a8c0"/></linearGradient><linearGradient id="gb" x1="0" x2="1"><stop offset="0" stop-color="#3098c0"/><stop offset="0.5" stop-color="#4a8ab8"/><stop offset="1" stop-color="#b870a8"/></linearGradient></defs><rect x="0" y="0" width="7" height="3" fill="url(#gt)"/><rect x="0" y="3" width="7" height="0.5" fill="#8a7a98"/><rect x="0" y="3.6" width="7" height="2.4" fill="url(#gb)"/></svg>
<svg class="a" style="left:8px;top:297px" width="7" height="6" viewBox="0 0 7 6"><path d="M1 1.3 l2.5 2.6 l2.5 -2.6" stroke="#5f6268" stroke-width="0.7" fill="none"/></svg>
<div class="a" style="left:16px;top:295px;width:8.5px;height:11px;background:#3ddc75;border:0.6px solid #2a1c22"></div>
<span class="t" id="t60" style="left:17.6px;top:298.77px;font-size:5.0px;line-height:5.0px;color:#14301c;font-weight:normal;transform:scaleX(0.849);">A2</span>
<div class="a" style="left:27px;top:298px;width:5px;height:5px;background:transparent;border:0.6px solid #44474d;border-radius:50%"></div>
<svg class="a" style="left:35px;top:298px" width="7" height="6.3" viewBox="0 0 7 6" preserveAspectRatio="none"><defs><linearGradient id="gt" x1="0" x2="1"><stop offset="0" stop-color="#3aa8cc"/><stop offset="0.45" stop-color="#50c8e8"/><stop offset="0.75" stop-color="#249c8c"/><stop offset="1" stop-color="#38a8c0"/></linearGradient><linearGradient id="gb" x1="0" x2="1"><stop offset="0" stop-color="#3098c0"/><stop offset="0.5" stop-color="#4a8ab8"/><stop offset="1" stop-color="#b870a8"/></linearGradient></defs><rect x="0" y="0" width="7" height="3" fill="url(#gt)"/><rect x="0" y="3" width="7" height="0.5" fill="#8a7a98"/><rect x="0" y="3.6" width="7" height="2.4" fill="url(#gb)"/></svg>
<svg class="a" style="left:44px;top:298px" width="7" height="6.3" viewBox="0 0 7 6" preserveAspectRatio="none"><defs><linearGradient id="gt" x1="0" x2="1"><stop offset="0" stop-color="#3aa8cc"/><stop offset="0.45" stop-color="#50c8e8"/><stop offset="0.75" stop-color="#249c8c"/><stop offset="1" stop-color="#38a8c0"/></linearGradient><linearGradient id="gb" x1="0" x2="1"><stop offset="0" stop-color="#3098c0"/><stop offset="0.5" stop-color="#4a8ab8"/><stop offset="1" stop-color="#b870a8"/></linearGradient></defs><rect x="0" y="0" width="7" height="3" fill="url(#gt)"/><rect x="0" y="3" width="7" height="0.5" fill="#8a7a98"/><rect x="0" y="3.6" width="7" height="2.4" fill="url(#gb)"/></svg>
<div class="a" style="left:52.3px;top:219px;width:1px;height:101px;background:#9a9ca0;"></div>
<svg class="a" style="left:52px;top:214px" width="10" height="6" viewBox="0 0 10 6"><path d="M0.5 0.5 h2.5 l-2.5 5z" fill="#f2f2f2"/><rect x="4.5" y="1" width="3.5" height="3.5" rx="1" fill="#3a6a8a" stroke="#d0d2d6" stroke-width="0.5"/></svg>
<div class="a" style="left:52px;top:479.3px;width:640px;height:0.8px;background:#2b2e33;"></div>
<div class="a" style="left:55px;top:483.2px;width:93px;height:1.9px;background:#b0b2b6;border-radius:1px"></div>
<div class="a" style="left:692px;top:194px;width:108px;height:284px;background:#2d2f34;"></div>
<div class="a" style="left:692px;top:193.3px;width:108px;height:0.7px;background:#3a3d44;"></div>
<div class="a" style="left:692px;top:194px;width:1.2px;height:284px;background:#3c3f46;"></div>
<div class="a" style="left:693px;top:194px;width:29px;height:283px;background:#2d2f34;"></div>
<div class="a" style="left:692px;top:194px;width:1.5px;height:283px;background:#393c42;"></div>
<div class="a" style="left:694px;top:194.5px;width:27px;height:8.3px;background:#31343b;border-bottom:0.8px solid #26282c"></div>
<span class="t" id="t61" style="left:704.5px;top:197.57px;font-size:5px;line-height:5px;color:#e8e9eb;font-weight:bold;transform:scaleX(0.937);">A1</span>
<svg class="a" style="left:695px;top:207.5px" width="5" height="5" viewBox="0 0 7 6" preserveAspectRatio="none"><defs><linearGradient id="gt" x1="0" x2="1"><stop offset="0" stop-color="#3aa8cc"/><stop offset="0.45" stop-color="#50c8e8"/><stop offset="0.75" stop-color="#249c8c"/><stop offset="1" stop-color="#38a8c0"/></linearGradient><linearGradient id="gb" x1="0" x2="1"><stop offset="0" stop-color="#3098c0"/><stop offset="0.5" stop-color="#4a8ab8"/><stop offset="1" stop-color="#b870a8"/></linearGradient></defs><rect x="0" y="0" width="7" height="3" fill="url(#gt)"/><rect x="0" y="3" width="7" height="0.5" fill="#8a7a98"/><rect x="0" y="3.6" width="7" height="2.4" fill="url(#gb)"/></svg>
<svg class="a" style="left:693px;top:206px" width="29" height="8" viewBox="0 0 29 8"><path d="M9.5 6 v-2 a2 2 0 0 1 4 0 v2" stroke="#55585e" stroke-width="0.7" fill="none"/><path d="M24 6 l3 -3" stroke="#4a4d53" stroke-width="0.8"/></svg>
<div class="a" style="left:709.5px;top:207.5px;width:4px;height:4px;background:#e84a5c;border-radius:50%;box-shadow:0 0 0 0.8px #1c2a2a"></div>
<div class="a" style="left:695px;top:219.5px;width:12px;height:2.5px;background:#3daee9;border-radius:1.2px;box-shadow:0 0.6px 0 0.3px #4a2424"></div>
<div class="a" style="left:708px;top:220px;width:12.5px;height:1.8px;background:#8a8c90;border-radius:1px"></div>
<div class="a" style="left:705.5px;top:217.3px;width:5.5px;height:6.5px;background:#2a2c31;border:0.7px solid #8a8c90;border-radius:50%"></div>
<div class="a" style="left:696.5px;top:223.8px;width:0.8px;height:1.6px;background:#3daee9;"></div>
<div class="a" style="left:706.5px;top:223.8px;width:0.8px;height:1.6px;background:#3daee9;"></div>
<div class="a" style="left:716.5px;top:223.8px;width:0.8px;height:1.6px;background:#6a6c70;"></div>
<span class="t" id="t62" style="left:696px;top:229.24px;font-size:4.8px;line-height:4.8px;color:#b0b2b6;font-weight:normal;transform:scaleX(1.116);">I</span>
<div class="a" style="left:698.5px;top:227.5px;width:15px;height:7px;background:#1f2124;border-radius:3px"></div>
<div class="a" style="left:699.5px;top:229px;width:3.5px;height:4px;background:#1f2124;border:0.6px solid #9a9ca0;border-radius:50%"></div>
<svg class="a" style="left:708px;top:227px" width="6" height="8" viewBox="0 0 6 8"><path d="M1.3 3 l1.7 -1.7 l1.7 1.7 M1.3 5 l1.7 1.7 l1.7 -1.7" stroke="#a8aaae" stroke-width="0.7" fill="none"/></svg>
<span class="t" id="t63" style="left:717.5px;top:229.2px;font-size:5.2px;line-height:5.2px;color:#c0c2c6;font-weight:normal;transform:scaleX(0.933);">D</span>
<div class="a" style="left:702.3px;top:237px;width:10.7px;height:228px;background:#1a261d;"></div>
<div class="a" style="left:702.8px;top:237px;width:4.6px;height:11px;background:#3c2824;"></div>
<div class="a" style="left:702.8px;top:248px;width:4.6px;height:19px;background:#38372a;"></div>
<div class="a" style="left:702.8px;top:267px;width:4.6px;height:112px;background:#1f3a25;"></div>
<div class="a" style="left:702.8px;top:379px;width:4.6px;height:86px;background:#1b291e;"></div>
<div class="a" style="left:708px;top:237px;width:4.6px;height:11px;background:#3c2824;"></div>
<div class="a" style="left:708px;top:248px;width:4.6px;height:19px;background:#38372a;"></div>
<div class="a" style="left:708px;top:267px;width:4.6px;height:112px;background:#1f3a25;"></div>
<div class="a" style="left:708px;top:379px;width:4.6px;height:86px;background:#1b291e;"></div>
<div class="a" style="left:716.5px;top:237px;width:2.6px;height:91px;background:#8a8c90;border-radius:1.3px"></div>
<div class="a" style="left:716px;top:331px;width:3.6px;height:134px;background:#3a2220;border-radius:1.5px"></div>
<div class="a" style="left:716.6px;top:331px;width:2.4px;height:134px;background:#3daee9;border-radius:1.2px"></div>
<div class="a" style="left:714.5px;top:325px;width:6.5px;height:6.5px;background:#2a2c31;border:0.7px solid #8a8c90;border-radius:50%"></div>
<span class="t" id="t64" style="left:697.4px;top:246.11px;font-size:4.6px;line-height:4.6px;color:#b8babe;font-weight:normal;transform:scaleX(1.093);">0</span>
<span class="t" id="t65" style="left:695.8px;top:265.61px;font-size:4.6px;line-height:4.6px;color:#b8babe;font-weight:normal;transform:scaleX(1.368);">-2</span>
<span class="t" id="t66" style="left:695.8px;top:290.61px;font-size:4.6px;line-height:4.6px;color:#b8babe;font-weight:normal;transform:scaleX(1.368);">-5</span>
<span class="t" id="t67" style="left:694.2px;top:326.61px;font-size:4.6px;line-height:4.6px;color:#b8babe;font-weight:normal;transform:scaleX(1.265);">-10</span>
<span class="t" id="t68" style="left:694.2px;top:355.61px;font-size:4.6px;line-height:4.6px;color:#b8babe;font-weight:normal;transform:scaleX(1.265);">-15</span>
<span class="t" id="t69" style="left:694.2px;top:377.11px;font-size:4.6px;line-height:4.6px;color:#b8babe;font-weight:normal;transform:scaleX(1.265);">-20</span>
<span class="t" id="t70" style="left:694.2px;top:409.11px;font-size:4.6px;line-height:4.6px;color:#b8babe;font-weight:normal;transform:scaleX(1.265);">-30</span>
<span class="t" id="t71" style="left:694.2px;top:436.61px;font-size:4.6px;line-height:4.6px;color:#b8babe;font-weight:normal;transform:scaleX(1.265);">-45</span>
<div class="a" style="left:694px;top:466.5px;width:19px;height:9.5px;background:#222428;border-radius:1px"></div>
<div class="a" style="left:714px;top:466.5px;width:7px;height:9.5px;background:#222428;border-radius:2px"></div>
<span class="t" id="t72" style="left:695px;top:470.44px;font-size:4.8px;line-height:4.8px;color:#d8d9dc;font-weight:normal;transform:scaleX(0.986);">0.00dB</span>
<svg class="a" style="left:715px;top:466px" width="6" height="10" viewBox="0 0 6 10"><path d="M1.3 4 l1.7 -1.7 l1.7 1.7 M1.3 6 l1.7 1.7 l1.7 -1.7" stroke="#a8aaae" stroke-width="0.7" fill="none"/></svg>
<div class="a" style="left:723px;top:194px;width:29px;height:283px;background:#2d2f34;"></div>
<div class="a" style="left:722px;top:194px;width:1.5px;height:283px;background:#393c42;"></div>
<div class="a" style="left:724px;top:194.5px;width:27px;height:8.3px;background:#31343b;border-bottom:0.8px solid #26282c"></div>
<span class="t" id="t73" style="left:734.5px;top:197.57px;font-size:5px;line-height:5px;color:#e8e9eb;font-weight:bold;transform:scaleX(0.937);">A2</span>
<svg class="a" style="left:725px;top:207.5px" width="5" height="5" viewBox="0 0 7 6" preserveAspectRatio="none"><defs><linearGradient id="gt" x1="0" x2="1"><stop offset="0" stop-color="#3aa8cc"/><stop offset="0.45" stop-color="#50c8e8"/><stop offset="0.75" stop-color="#249c8c"/><stop offset="1" stop-color="#38a8c0"/></linearGradient><linearGradient id="gb" x1="0" x2="1"><stop offset="0" stop-color="#3098c0"/><stop offset="0.5" stop-color="#4a8ab8"/><stop offset="1" stop-color="#b870a8"/></linearGradient></defs><rect x="0" y="0" width="7" height="3" fill="url(#gt)"/><rect x="0" y="3" width="7" height="0.5" fill="#8a7a98"/><rect x="0" y="3.6" width="7" height="2.4" fill="url(#gb)"/></svg>
<svg class="a" style="left:723px;top:206px" width="29" height="8" viewBox="0 0 29 8"><path d="M9.5 6 v-2 a2 2 0 0 1 4 0 v2" stroke="#55585e" stroke-width="0.7" fill="none"/><path d="M24 6 l3 -3" stroke="#4a4d53" stroke-width="0.8"/></svg>
<div class="a" style="left:739.5px;top:207.5px;width:4px;height:4px;background:#e84a5c;border-radius:50%;box-shadow:0 0 0 0.8px #1c2a2a"></div>
<div class="a" style="left:725px;top:219.5px;width:12px;height:2.5px;background:#3daee9;border-radius:1.2px;box-shadow:0 0.6px 0 0.3px #4a2424"></div>
<div class="a" style="left:738px;top:220px;width:12.5px;height:1.8px;background:#8a8c90;border-radius:1px"></div>
<div class="a" style="left:735.5px;top:217.3px;width:5.5px;height:6.5px;background:#2a2c31;border:0.7px solid #8a8c90;border-radius:50%"></div>
<div class="a" style="left:726.5px;top:223.8px;width:0.8px;height:1.6px;background:#3daee9;"></div>
<div class="a" style="left:736.5px;top:223.8px;width:0.8px;height:1.6px;background:#3daee9;"></div>
<div class="a" style="left:746.5px;top:223.8px;width:0.8px;height:1.6px;background:#6a6c70;"></div>
<span class="t" id="t74" style="left:726px;top:229.24px;font-size:4.8px;line-height:4.8px;color:#b0b2b6;font-weight:normal;transform:scaleX(1.116);">I</span>
<div class="a" style="left:728.5px;top:227.5px;width:15px;height:7px;background:#1f2124;border-radius:3px"></div>
<div class="a" style="left:729.5px;top:229px;width:3.5px;height:4px;background:#1f2124;border:0.6px solid #9a9ca0;border-radius:50%"></div>
<svg class="a" style="left:738px;top:227px" width="6" height="8" viewBox="0 0 6 8"><path d="M1.3 3 l1.7 -1.7 l1.7 1.7 M1.3 5 l1.7 1.7 l1.7 -1.7" stroke="#a8aaae" stroke-width="0.7" fill="none"/></svg>
<span class="t" id="t75" style="left:747.5px;top:229.2px;font-size:5.2px;line-height:5.2px;color:#c0c2c6;font-weight:normal;transform:scaleX(0.933);">D</span>
<div class="a" style="left:732.3px;top:237px;width:10.7px;height:228px;background:#1a261d;"></div>
<div class="a" style="left:732.8px;top:237px;width:4.6px;height:11px;background:#3c2824;"></div>
<div class="a" style="left:732.8px;top:248px;width:4.6px;height:19px;background:#38372a;"></div>
<div class="a" style="left:732.8px;top:267px;width:4.6px;height:112px;background:#1f3a25;"></div>
<div class="a" style="left:732.8px;top:379px;width:4.6px;height:86px;background:#1b291e;"></div>
<div class="a" style="left:738px;top:237px;width:4.6px;height:11px;background:#3c2824;"></div>
<div class="a" style="left:738px;top:248px;width:4.6px;height:19px;background:#38372a;"></div>
<div class="a" style="left:738px;top:267px;width:4.6px;height:112px;background:#1f3a25;"></div>
<div class="a" style="left:738px;top:379px;width:4.6px;height:86px;background:#1b291e;"></div>
<div class="a" style="left:746.5px;top:237px;width:2.6px;height:91px;background:#8a8c90;border-radius:1.3px"></div>
<div class="a" style="left:746px;top:331px;width:3.6px;height:134px;background:#3a2220;border-radius:1.5px"></div>
<div class="a" style="left:746.6px;top:331px;width:2.4px;height:134px;background:#3daee9;border-radius:1.2px"></div>
<div class="a" style="left:744.5px;top:325px;width:6.5px;height:6.5px;background:#2a2c31;border:0.7px solid #8a8c90;border-radius:50%"></div>
<span class="t" id="t76" style="left:727.4px;top:246.11px;font-size:4.6px;line-height:4.6px;color:#b8babe;font-weight:normal;transform:scaleX(1.093);">0</span>
<span class="t" id="t77" style="left:725.8px;top:265.61px;font-size:4.6px;line-height:4.6px;color:#b8babe;font-weight:normal;transform:scaleX(1.368);">-2</span>
<span class="t" id="t78" style="left:725.8px;top:290.61px;font-size:4.6px;line-height:4.6px;color:#b8babe;font-weight:normal;transform:scaleX(1.368);">-5</span>
<span class="t" id="t79" style="left:724.2px;top:326.61px;font-size:4.6px;line-height:4.6px;color:#b8babe;font-weight:normal;transform:scaleX(1.265);">-10</span>
<span class="t" id="t80" style="left:724.2px;top:355.61px;font-size:4.6px;line-height:4.6px;color:#b8babe;font-weight:normal;transform:scaleX(1.265);">-15</span>
<span class="t" id="t81" style="left:724.2px;top:377.11px;font-size:4.6px;line-height:4.6px;color:#b8babe;font-weight:normal;transform:scaleX(1.265);">-20</span>
<span class="t" id="t82" style="left:724.2px;top:409.11px;font-size:4.6px;line-height:4.6px;color:#b8babe;font-weight:normal;transform:scaleX(1.265);">-30</span>
<span class="t" id="t83" style="left:724.2px;top:436.61px;font-size:4.6px;line-height:4.6px;color:#b8babe;font-weight:normal;transform:scaleX(1.265);">-45</span>
<div class="a" style="left:724px;top:466.5px;width:19px;height:9.5px;background:#222428;border-radius:1px"></div>
<div class="a" style="left:744px;top:466.5px;width:7px;height:9.5px;background:#222428;border-radius:2px"></div>
<span class="t" id="t84" style="left:725px;top:470.44px;font-size:4.8px;line-height:4.8px;color:#d8d9dc;font-weight:normal;transform:scaleX(0.986);">0.00dB</span>
<svg class="a" style="left:745px;top:466px" width="6" height="10" viewBox="0 0 6 10"><path d="M1.3 4 l1.7 -1.7 l1.7 1.7 M1.3 6 l1.7 1.7 l1.7 -1.7" stroke="#a8aaae" stroke-width="0.7" fill="none"/></svg>
<div class="a" style="left:751.5px;top:194px;width:1.5px;height:283px;background:#393c42;"></div>
<div class="a" style="left:753px;top:194px;width:2px;height:283px;background:#26282c;"></div>
<div class="a" style="left:755px;top:194px;width:45px;height:283px;background:#2d2f34;"></div>
<div class="a" style="left:771px;top:194.5px;width:28px;height:8.3px;background:#31343b;border-bottom:0.8px solid #26282c"></div>
<span class="t" id="t85" style="left:777px;top:197.57px;font-size:5px;line-height:5px;color:#e8e9eb;font-weight:normal;transform:scaleX(0.913);">Maestra</span>
<div class="a" style="left:775px;top:209.5px;width:1px;height:1px;background:#6a6c70;"></div>
<svg class="a" style="left:782px;top:207.5px" width="5" height="5" viewBox="0 0 7 6" preserveAspectRatio="none"><defs><linearGradient id="gt" x1="0" x2="1"><stop offset="0" stop-color="#3aa8cc"/><stop offset="0.45" stop-color="#50c8e8"/><stop offset="0.75" stop-color="#249c8c"/><stop offset="1" stop-color="#38a8c0"/></linearGradient><linearGradient id="gb" x1="0" x2="1"><stop offset="0" stop-color="#3098c0"/><stop offset="0.5" stop-color="#4a8ab8"/><stop offset="1" stop-color="#b870a8"/></linearGradient></defs><rect x="0" y="0" width="7" height="3" fill="url(#gt)"/><rect x="0" y="3" width="7" height="0.5" fill="#8a7a98"/><rect x="0" y="3.6" width="7" height="2.4" fill="url(#gb)"/></svg>
<svg class="a" style="left:789px;top:206px" width="8" height="8" viewBox="0 0 8 8"><path d="M2 6 l3 -3" stroke="#4a4d53" stroke-width="0.8"/></svg>
<div class="a" style="left:772px;top:219.5px;width:11px;height:2.5px;background:#3daee9;border-radius:1.2px;box-shadow:0 0.6px 0 0.3px #4a2424"></div>
<div class="a" style="left:787px;top:220px;width:10.5px;height:1.8px;background:#8a8c90;border-radius:1px"></div>
<div class="a" style="left:782.5px;top:217.3px;width:5.5px;height:6.5px;background:#2a2c31;border:0.7px solid #8a8c90;border-radius:50%"></div>
<div class="a" style="left:773.5px;top:223.8px;width:0.8px;height:1.6px;background:#3daee9;"></div>
<div class="a" style="left:783.5px;top:223.8px;width:0.8px;height:1.6px;background:#3daee9;"></div>
<div class="a" style="left:793.5px;top:223.8px;width:0.8px;height:1.6px;background:#6a6c70;"></div>
<span class="t" id="t86" style="left:773px;top:229.24px;font-size:4.8px;line-height:4.8px;color:#b0b2b6;font-weight:normal;transform:scaleX(1.116);">I</span>
<div class="a" style="left:776px;top:227.5px;width:15px;height:7px;background:#1f2124;border-radius:3px"></div>
<div class="a" style="left:777px;top:229px;width:3.5px;height:4px;background:#1f2124;border:0.6px solid #9a9ca0;border-radius:50%"></div>
<svg class="a" style="left:786px;top:227px" width="6" height="8" viewBox="0 0 6 8"><path d="M1.3 3 l1.7 -1.7 l1.7 1.7 M1.3 5 l1.7 1.7 l1.7 -1.7" stroke="#a8aaae" stroke-width="0.7" fill="none"/></svg>
<span class="t" id="t87" style="left:795px;top:229.2px;font-size:5.2px;line-height:5.2px;color:#c0c2c6;font-weight:normal;transform:scaleX(0.933);">D</span>
<div class="a" style="left:779.3px;top:237px;width:10.7px;height:228px;background:#1a261d;"></div>
<div class="a" style="left:779.8px;top:237px;width:4.6px;height:11px;background:#3c2824;"></div>
<div class="a" style="left:779.8px;top:248px;width:4.6px;height:19px;background:#38372a;"></div>
<div class="a" style="left:779.8px;top:267px;width:4.6px;height:112px;background:#1f3a25;"></div>
<div class="a" style="left:779.8px;top:379px;width:4.6px;height:86px;background:#1b291e;"></div>
<div class="a" style="left:785px;top:237px;width:4.6px;height:11px;background:#3c2824;"></div>
<div class="a" style="left:785px;top:248px;width:4.6px;height:19px;background:#38372a;"></div>
<div class="a" style="left:785px;top:267px;width:4.6px;height:112px;background:#1f3a25;"></div>
<div class="a" style="left:785px;top:379px;width:4.6px;height:86px;background:#1b291e;"></div>
<div class="a" style="left:793.5px;top:237px;width:2.6px;height:91px;background:#8a8c90;border-radius:1.3px"></div>
<div class="a" style="left:793px;top:331px;width:3.6px;height:134px;background:#3a2220;border-radius:1.5px"></div>
<div class="a" style="left:793.6px;top:331px;width:2.4px;height:134px;background:#3daee9;border-radius:1.2px"></div>
<div class="a" style="left:791.5px;top:325px;width:6.5px;height:6.5px;background:#2a2c31;border:0.7px solid #8a8c90;border-radius:50%"></div>
<span class="t" id="t88" style="left:771.9px;top:246.11px;font-size:4.6px;line-height:4.6px;color:#b8babe;font-weight:normal;transform:scaleX(1.093);">0</span>
<span class="t" id="t89" style="left:770.3px;top:265.61px;font-size:4.6px;line-height:4.6px;color:#b8babe;font-weight:normal;transform:scaleX(1.368);">-2</span>
<span class="t" id="t90" style="left:770.3px;top:290.61px;font-size:4.6px;line-height:4.6px;color:#b8babe;font-weight:normal;transform:scaleX(1.368);">-5</span>
<span class="t" id="t91" style="left:768.7px;top:326.61px;font-size:4.6px;line-height:4.6px;color:#b8babe;font-weight:normal;transform:scaleX(1.265);">-10</span>
<span class="t" id="t92" style="left:768.7px;top:355.61px;font-size:4.6px;line-height:4.6px;color:#b8babe;font-weight:normal;transform:scaleX(1.265);">-15</span>
<span class="t" id="t93" style="left:768.7px;top:377.11px;font-size:4.6px;line-height:4.6px;color:#b8babe;font-weight:normal;transform:scaleX(1.265);">-20</span>
<span class="t" id="t94" style="left:768.7px;top:409.11px;font-size:4.6px;line-height:4.6px;color:#b8babe;font-weight:normal;transform:scaleX(1.265);">-30</span>
<span class="t" id="t95" style="left:768.7px;top:436.61px;font-size:4.6px;line-height:4.6px;color:#b8babe;font-weight:normal;transform:scaleX(1.265);">-45</span>
<div class="a" style="left:770px;top:466.5px;width:20px;height:9.5px;background:#222428;border-radius:1px"></div>
<div class="a" style="left:791px;top:466.5px;width:7px;height:9.5px;background:#222428;border-radius:2px"></div>
<span class="t" id="t96" style="left:771px;top:470.44px;font-size:4.8px;line-height:4.8px;color:#d8d9dc;font-weight:normal;transform:scaleX(0.986);">0.00dB</span>
<svg class="a" style="left:792px;top:466px" width="6" height="10" viewBox="0 0 6 10"><path d="M1.3 4 l1.7 -1.7 l1.7 1.7 M1.3 6 l1.7 1.7 l1.7 -1.7" stroke="#a8aaae" stroke-width="0.7" fill="none"/></svg>
<div class="a" style="left:692px;top:477px;width:108px;height:13px;background:#30333a;"></div>
<div class="a" style="left:693px;top:478px;width:40px;height:11px;background:#2a2c31;border:0.6px solid #3c3f45"></div>
<span class="t" id="t97" style="left:694.5px;top:482.24px;font-size:4.8px;line-height:4.8px;color:#e6e7e9;font-weight:normal;transform:scaleX(0.884);">Mezclador de audio</span>
<div class="a" style="left:733px;top:478px;width:58px;height:11px;background:#34373d;border-radius:1px"></div>
<span class="t" id="t98" style="left:734.5px;top:482.24px;font-size:4.8px;line-height:4.8px;color:#dcdde0;font-weight:normal;transform:scaleX(0.908);">Pila de efectos/composición</span>
<div class="a" style="left:692px;top:490px;width:108px;height:9px;background:#30333a;"></div>
<div class="a" style="left:0px;top:498.5px;width:800px;height:1.5px;background:#26282c;"></div>
<div class="a" style="left:696.5px;top:490.5px;width:7.5px;height:8px;background:#5a5c61;border-radius:1px"></div>
<div class="a" style="left:705.5px;top:490.5px;width:7.5px;height:8px;background:#4d5056;border-radius:1px"></div>
<svg class="a" style="left:707.0px;top:492.5px" width="4.5" height="4.5" viewBox="0 0 7 6" preserveAspectRatio="none"><defs><linearGradient id="gt" x1="0" x2="1"><stop offset="0" stop-color="#3aa8cc"/><stop offset="0.45" stop-color="#50c8e8"/><stop offset="0.75" stop-color="#249c8c"/><stop offset="1" stop-color="#38a8c0"/></linearGradient><linearGradient id="gb" x1="0" x2="1"><stop offset="0" stop-color="#3098c0"/><stop offset="0.5" stop-color="#4a8ab8"/><stop offset="1" stop-color="#b870a8"/></linearGradient></defs><rect x="0" y="0" width="7" height="3" fill="url(#gt)"/><rect x="0" y="3" width="7" height="0.5" fill="#8a7a98"/><rect x="0" y="3.6" width="7" height="2.4" fill="url(#gb)"/></svg>
<div class="a" style="left:714px;top:490.5px;width:7.5px;height:8px;background:#4d5056;border-radius:1px"></div>
<svg class="a" style="left:715.5px;top:492.5px" width="4.5" height="4.5" viewBox="0 0 7 6" preserveAspectRatio="none"><defs><linearGradient id="gt" x1="0" x2="1"><stop offset="0" stop-color="#3aa8cc"/><stop offset="0.45" stop-color="#50c8e8"/><stop offset="0.75" stop-color="#249c8c"/><stop offset="1" stop-color="#38a8c0"/></linearGradient><linearGradient id="gb" x1="0" x2="1"><stop offset="0" stop-color="#3098c0"/><stop offset="0.5" stop-color="#4a8ab8"/><stop offset="1" stop-color="#b870a8"/></linearGradient></defs><rect x="0" y="0" width="7" height="3" fill="url(#gt)"/><rect x="0" y="3" width="7" height="0.5" fill="#8a7a98"/><rect x="0" y="3.6" width="7" height="2.4" fill="url(#gb)"/></svg>
<div class="a" style="left:722.5px;top:490.5px;width:7.5px;height:8px;background:#4d5056;border-radius:1px"></div>
<svg class="a" style="left:724.0px;top:492.5px" width="4.5" height="4.5" viewBox="0 0 7 6" preserveAspectRatio="none"><defs><linearGradient id="gt" x1="0" x2="1"><stop offset="0" stop-color="#3aa8cc"/><stop offset="0.45" stop-color="#50c8e8"/><stop offset="0.75" stop-color="#249c8c"/><stop offset="1" stop-color="#38a8c0"/></linearGradient><linearGradient id="gb" x1="0" x2="1"><stop offset="0" stop-color="#3098c0"/><stop offset="0.5" stop-color="#4a8ab8"/><stop offset="1" stop-color="#b870a8"/></linearGradient></defs><rect x="0" y="0" width="7" height="3" fill="url(#gt)"/><rect x="0" y="3" width="7" height="0.5" fill="#8a7a98"/><rect x="0" y="3.6" width="7" height="2.4" fill="url(#gb)"/></svg>
<div class="a" style="left:731px;top:490.5px;width:7.5px;height:8px;background:#4d5056;border-radius:1px"></div>
<svg class="a" style="left:732.5px;top:492.5px" width="4.5" height="4.5" viewBox="0 0 7 6" preserveAspectRatio="none"><defs><linearGradient id="gt" x1="0" x2="1"><stop offset="0" stop-color="#3aa8cc"/><stop offset="0.45" stop-color="#50c8e8"/><stop offset="0.75" stop-color="#249c8c"/><stop offset="1" stop-color="#38a8c0"/></linearGradient><linearGradient id="gb" x1="0" x2="1"><stop offset="0" stop-color="#3098c0"/><stop offset="0.5" stop-color="#4a8ab8"/><stop offset="1" stop-color="#b870a8"/></linearGradient></defs><rect x="0" y="0" width="7" height="3" fill="url(#gt)"/><rect x="0" y="3" width="7" height="0.5" fill="#8a7a98"/><rect x="0" y="3.6" width="7" height="2.4" fill="url(#gb)"/></svg>
<div class="a" style="left:745px;top:492px;width:0.8px;height:0.8px;background:#55585e;"></div>
<div class="a" style="left:745px;top:495px;width:0.8px;height:0.8px;background:#55585e;"></div>
<div class="a" style="left:749px;top:492px;width:0.8px;height:0.8px;background:#55585e;"></div>
<div class="a" style="left:749px;top:495px;width:0.8px;height:0.8px;background:#55585e;"></div>
<div class="a" style="left:757px;top:492px;width:0.8px;height:0.8px;background:#55585e;"></div>
<div class="a" style="left:757px;top:495px;width:0.8px;height:0.8px;background:#55585e;"></div>
<div class="a" style="left:760px;top:493.5px;width:18px;height:1.8px;background:#8a8c90;border-radius:1px"></div>
<div class="a" style="left:782px;top:493.2px;width:8.5px;height:2.4px;background:#3daee9;border-radius:1px"></div>
<div class="a" style="left:777px;top:491.2px;width:6px;height:6px;background:#2a2c31;border:0.7px solid #8a8c90;border-radius:50%"></div>
<div class="a" style="left:797px;top:492px;width:0.8px;height:0.8px;background:#55585e;"></div>
<div class="a" style="left:797px;top:495px;width:0.8px;height:0.8px;background:#55585e;"></div>
</body></html>
